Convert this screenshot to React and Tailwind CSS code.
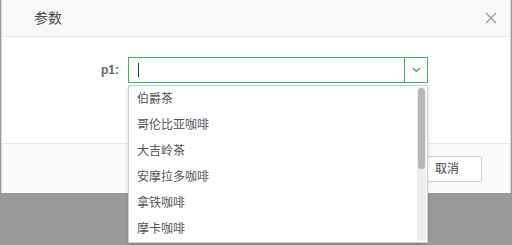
const options = ["伯爵茶", "哥伦比亚咖啡", "大吉岭茶", "安摩拉多咖啡", "拿铁咖啡", "摩卡咖啡"];

export default function App() {
  return (
    <div
      className="w-[512px] h-[245px] bg-[#9a9a9a] overflow-hidden relative"
      style={{ fontFamily: '"Liberation Sans", "Noto Sans CJK SC", sans-serif' }}
    >
      <div className="ml-[1px] w-[510px] bg-white border-x border-[#d6d6d6] flex flex-col">
        {/* header */}
        <div className="h-[37px] bg-[#f8f8f8] border-b border-[#e6e6e6] flex items-center justify-between pl-[32px] pr-[13px]">
          <span className="text-[14px] text-[#4a4a4a]">参数</span>
          <svg width="12" height="12" viewBox="0 0 12 12" className="mb-[1px]">
            <path d="M1 1 L11 11 M11 1 L1 11" stroke="#999" strokeWidth="1.2" fill="none" />
          </svg>
        </div>

        {/* body */}
        <div className="h-[106px] pt-[20px]">
          <div className="flex items-start">
            <div className="w-[117px] pt-[4px] text-right text-[12px] font-bold text-[#666]">p1:</div>
            <div className="ml-[9px] relative">
              <div className="w-[300px] h-[26px] border border-[#41b35d] flex">
                <div className="flex-1 flex items-center pl-[9px]">
                  <div className="w-[1px] h-[14px] bg-[#333]" />
                </div>
                <div className="w-[23px] border-l border-[#41b35d] flex items-center justify-center">
                  <svg width="9" height="6" viewBox="0 0 9 6">
                    <path d="M1 1 L4.5 4.5 L8 1" stroke="#41b35d" strokeWidth="1.5" fill="none" />
                  </svg>
                </div>
              </div>

              {/* dropdown list */}
              <div className="absolute z-10 left-0 top-[28px] w-[300px] h-[158px] bg-white border border-[#d0d0d0] shadow-[0_2px_4px_rgba(0,0,0,0.15)] flex overflow-hidden">
                <div className="flex-1 flex flex-col">
                  {options.map((o) => (
                    <div key={o} className="h-[26px] shrink-0 flex items-center pl-[8px] text-[12px] text-[#555]">
                      {o}
                    </div>
                  ))}
                </div>
                <div className="w-[9px] bg-[#eeeeee] rounded-[4px] my-[1px] mr-[1px] flex flex-col items-center">
                  <div className="w-[7px] h-[81px] bg-[#b8b8b8] rounded-[4px] mt-[1px]" />
                </div>
              </div>
            </div>
          </div>
        </div>

        {/* footer */}
        <div className="h-[50px] bg-[#fafafa] border-t border-[#e6e6e6] flex items-center justify-end gap-[10px] pr-[28px]">
          <button className="w-[70px] h-[26px] bg-white border border-[#d0d0d0] rounded-[2px] text-[12px] text-[#444]">
            确定
          </button>
          <button className="w-[70px] h-[26px] bg-white border border-[#d0d0d0] rounded-[2px] text-[12px] text-[#444]">
            取消
          </button>
        </div>
      </div>
    </div>
  );
}
